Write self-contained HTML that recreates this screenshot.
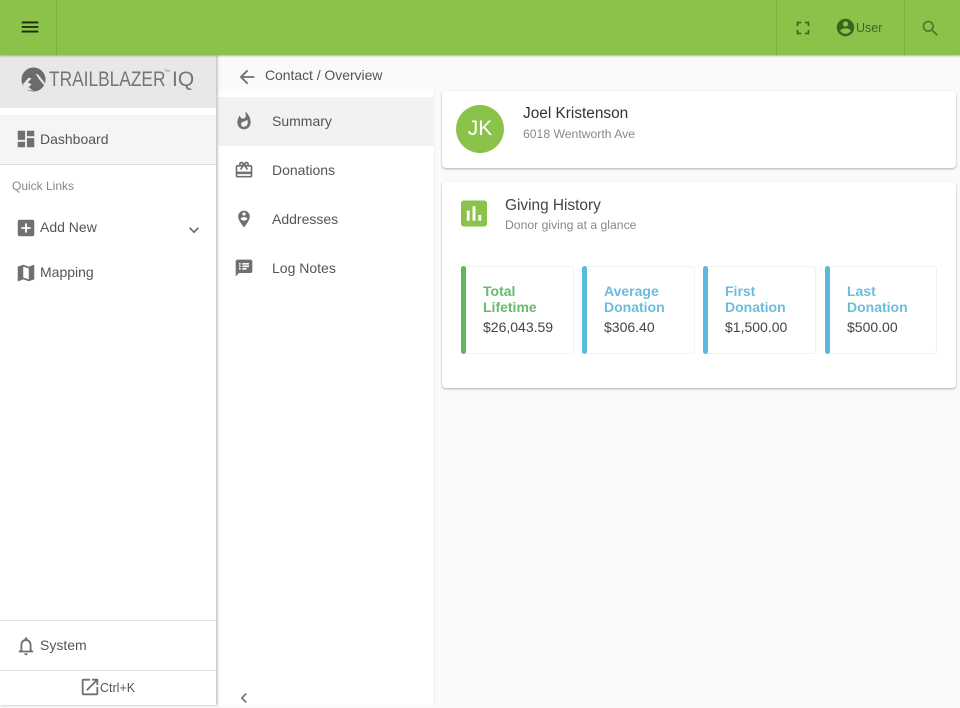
<!DOCTYPE html>
<html><head><meta charset="utf-8">
<style>
*{box-sizing:border-box}
html,body{margin:0;padding:0;width:960px;height:705px;overflow:hidden;background:#fafafa;font-family:"Liberation Sans",sans-serif;color:#555}
.a{position:absolute}
.t{position:absolute;white-space:nowrap;line-height:16px;font-size:14px;color:#555}
svg.i{position:absolute;width:22px;height:22px;fill:#707070}
.card{position:absolute;background:#fff;border-radius:4px;box-shadow:0 1px 2px rgba(0,0,0,.3)}
.st{position:absolute;top:266px;height:88px;background:#fff;border:1px solid #f2f2f2;border-radius:3px}
.st i{position:absolute;left:-1px;top:-1px;bottom:-1px;width:5px;background:#5bb9dc;border-radius:3px}
.st b{position:absolute;left:21px;top:16px;font-size:14px;line-height:16px;color:#6cbcdc;white-space:nowrap}
.st span{position:absolute;left:21px;top:52px;font-size:14px;line-height:16px;color:#444;white-space:nowrap}
</style></head><body>

<div class="a" style="left:218px;top:56px;width:217px;height:649px;background:#fff"></div>
<div class="a" style="left:218px;top:56px;width:217px;height:35px;background:#fafafa"></div>
<div class="a" style="left:434px;top:91px;width:1px;height:614px;background:#eee"></div>
<div class="a" style="left:218px;top:97px;width:217px;height:49px;background:#f2f2f2"></div>

<!-- top bar -->
<div class="a" style="left:0;top:0;width:960px;height:55px;background:#8bc34a;box-shadow:0 1px 2px rgba(0,0,0,.3);z-index:5">
  <div class="a" style="left:56px;top:0;width:1px;height:55px;background:#7cb342"></div>
  <div class="a" style="left:776px;top:0;width:1px;height:55px;background:#7cb342"></div>
  <div class="a" style="left:904px;top:0;width:1px;height:55px;background:#7cb342"></div>
  <svg class="i" viewBox="0 0 24 24" style="left:19px;top:16px;fill:#1b2a10"><path d="M3 18h18v-2H3v2zm0-5h18v-2H3v2zm0-7v2h18V6H3z"/></svg>
  <svg class="i" viewBox="0 0 24 24" style="left:792px;top:17px;fill:#41691f"><path d="M7 14H5v5h5v-2H7v-3zm-2-4h2V7h3V5H5v5zm12 7h-3v2h5v-5h-2v3zM14 5v2h3v3h2V5h-5z"/></svg>
  <svg class="i" viewBox="0 0 24 24" style="left:835px;top:17px;width:21px;height:21px;fill:#3d6320"><path d="M12 2C6.48 2 2 6.48 2 12s4.48 10 10 10 10-4.48 10-10S17.52 2 12 2zm0 3c1.66 0 3 1.34 3 3s-1.34 3-3 3-3-1.34-3-3 1.34-3 3-3zm0 14.2c-2.5 0-4.71-1.28-6-3.22.03-1.99 4-3.08 6-3.08 1.99 0 5.97 1.09 6 3.08-1.29 1.94-3.5 3.22-6 3.22z"/></svg>
  <div class="t" style="left:856px;top:20px;font-size:12.5px;color:#3f6622">User</div>
  <svg class="i" viewBox="0 0 24 24" style="left:920px;top:18px;width:21px;height:21px;fill:#4f7a2b"><path d="M15.5 14h-.79l-.28-.27C15.41 12.59 16 11.11 16 9.5 16 5.91 13.09 3 9.5 3S3 5.91 3 9.5 5.91 16 9.5 16c1.61 0 3.09-.59 4.23-1.57l.27.28v.79l5 4.99L20.49 19l-4.99-5zm-6 0C7.01 14 5 11.99 5 9.5S7.01 5 9.5 5 14 7.01 14 9.5 11.99 14 9.5 14z"/></svg>
</div>

<!-- sidebar -->
<div class="a" style="left:0;top:55px;width:216px;height:650px;background:#fff;box-shadow:1px 0 3px rgba(0,0,0,.3);z-index:3">
  <div class="a" style="left:0;top:0;width:216px;height:53px;background:#e8e8e8"></div>
  <svg class="a" viewBox="0 0 26 26" style="left:21px;top:12px;width:25px;height:25px">
    <circle cx="13" cy="13" r="12.5" fill="#6b6b6b"/>
    <path d="M11 6l-3 5 3 1-4 4 4 2-3 3 5 4-9-2-2-5 6-7z" fill="#e8e8e8"/>
    <path d="M15 7l3 1 7 9-1 2-5-6z" fill="#e8e8e8"/>
  </svg>
  <div class="t" style="left:49px;top:11px;font-size:21px;line-height:27px;color:#757575;transform-origin:left;transform:scaleX(.825)">TRAILBLAZER</div>
  <div class="t" style="left:164px;top:13px;font-size:4px;line-height:6px;color:#777">TM</div>
  <div class="t" style="left:172px;top:11px;font-size:21px;line-height:27px;color:#757575">IQ</div>

  <div class="a" style="left:0;top:60px;width:216px;height:50px;background:#f5f5f5;border-bottom:1px solid #ddd"></div>
  <svg class="i" viewBox="0 0 24 24" style="left:15px;top:73px"><path d="M3 13h8V3H3v10zm0 8h8v-6H3v6zm10 0h8V11h-8v10zm0-18v6h8V3h-8z"/></svg>
  <div class="t" style="left:40px;top:76px">Dashboard</div>

  <div class="t" style="left:12px;top:123px;font-size:12px;color:#888">Quick Links</div>

  <svg class="i" viewBox="0 0 24 24" style="left:15px;top:162px"><path d="M19 3H5c-1.11 0-2 .9-2 2v14c0 1.1.89 2 2 2h14c1.1 0 2-.9 2-2V5c0-1.1-.9-2-2-2zm-2 10h-4v4h-2v-4H7v-2h4V7h2v4h4v2z"/></svg>
  <div class="t" style="left:40px;top:164px">Add New</div>
  <svg class="i" viewBox="0 0 24 24" style="left:184px;top:165px;width:20px;height:20px"><path d="M16.59 8.59L12 13.17 7.41 8.59 6 10l6 6 6-6z"/></svg>

  <svg class="i" viewBox="0 0 24 24" style="left:15px;top:207px"><path d="M20.5 3l-.16.03L15 5.1 9 3 3.36 4.9c-.21.07-.36.25-.36.48V20.5c0 .28.22.5.5.5l.16-.03L9 18.9l6 2.1 5.64-1.9c.21-.07.36-.25.36-.48V3.5c0-.28-.22-.5-.5-.5zM15 19l-6-2.11V5l6 2.11V19z"/></svg>
  <div class="t" style="left:40px;top:209px">Mapping</div>

  <div class="a" style="left:0;top:565px;width:216px;height:1px;background:#e4e4e4"></div>
  <svg class="i" viewBox="0 0 24 24" style="left:15px;top:580px"><path d="M12 22c1.1 0 2-.9 2-2h-4c0 1.1.9 2 2 2zm6-6v-5c0-3.07-1.63-5.64-4.5-6.32V4c0-.83-.67-1.5-1.5-1.5s-1.5.67-1.5 1.5v.68C7.64 5.36 6 7.92 6 11v5l-2 2v1h16v-1l-2-2zm-2 1H8v-6c0-2.48 1.51-4.5 4-4.5s4 2.02 4 4.5v6z"/></svg>
  <div class="t" style="left:40px;top:582px">System</div>
  <div class="a" style="left:0;top:615px;width:216px;height:1px;background:#e4e4e4"></div>
  <svg class="i" viewBox="0 0 24 24" style="left:79px;top:621px"><path d="M19 19H5V5h7V3H5c-1.11 0-2 .9-2 2v14c0 1.1.89 2 2 2h14c1.1 0 2-.9 2-2v-7h-2v7zM14 3v2h3.59l-9.83 9.83 1.41 1.41L19 6.41V10h2V3h-7z"/></svg>
  <div class="t" style="left:100px;top:625px;font-size:12.5px">Ctrl+K</div>
</div>

<!-- secondary -->
<svg class="i" viewBox="0 0 24 24" style="left:236px;top:66px"><path d="M20 11H7.83l5.59-5.59L12 4l-8 8 8 8 1.41-1.41L7.83 13H20v-2z"/></svg>
<div class="t" style="left:265px;top:67px;letter-spacing:-.05px">Contact / Overview</div>

<svg class="i" viewBox="0 0 24 24" style="left:234px;top:111px;width:20px;height:20px"><path d="M13.5.67s.74 2.65.74 4.8c0 2.06-1.35 3.73-3.41 3.73-2.07 0-3.63-1.67-3.63-3.73l.03-.36C5.21 7.51 4 10.62 4 14c0 4.42 3.58 8 8 8s8-3.58 8-8C20 8.61 17.41 3.8 13.5.67zM11.71 19c-1.78 0-3.22-1.4-3.22-3.14 0-1.62 1.05-2.76 2.81-3.12 1.77-.36 3.6-1.21 4.62-2.58.39 1.29.59 2.65.59 4.04 0 2.65-2.15 4.8-4.8 4.8z"/></svg>
<div class="t" style="left:272px;top:113px">Summary</div>
<svg class="i" viewBox="0 0 24 24" style="left:234px;top:160px;width:20px;height:20px"><path d="M20 6h-2.18c.11-.31.18-.65.18-1 0-1.66-1.34-3-3-3-1.05 0-1.96.54-2.5 1.35l-.5.67-.5-.68C10.96 2.54 10.05 2 9 2 7.34 2 6 3.34 6 5c0 .35.07.69.18 1H4c-1.11 0-1.99.89-1.99 2L2 19c0 1.11.89 2 2 2h16c1.11 0 2-.89 2-2V8c0-1.11-.89-2-2-2zm-5-2c.55 0 1 .45 1 1s-.45 1-1 1-1-.45-1-1 .45-1 1-1zM9 4c.55 0 1 .45 1 1s-.45 1-1 1-1-.45-1-1 .45-1 1-1zm11 15H4v-2h16v2zm0-5H4V8h5.08L7 10.83 8.62 12 11 8.76l1-1.36 1 1.36L15.38 12 17 10.83 14.92 8H20v6z"/></svg>
<div class="t" style="left:272px;top:162px">Donations</div>
<svg class="i" viewBox="0 0 24 24" style="left:234px;top:209px;width:20px;height:20px"><path d="M12 2C8.14 2 5 5.14 5 9c0 5.25 7 13 7 13s7-7.75 7-13c0-3.86-3.14-7-7-7zm0 2c1.1 0 2 .9 2 2 0 1.11-.9 2-2 2s-2-.89-2-2c0-1.1.9-2 2-2zm0 10c-1.67 0-3.14-.85-4-2.15.02-1.32 2.67-2.05 4-2.05s3.98.73 4 2.05c-.86 1.3-2.33 2.15-4 2.15z"/></svg>
<div class="t" style="left:272px;top:211px">Addresses</div>
<svg class="i" viewBox="0 0 24 24" style="left:234px;top:258px;width:20px;height:20px"><path d="M20 2H4c-1.1 0-1.99.9-1.99 2L2 22l4-4h14c1.1 0 2-.9 2-2V4c0-1.1-.9-2-2-2zM8 14H6v-2h2v2zm0-3H6V9h2v2zm0-3H6V6h2v2zm7 6h-5v-2h5v2zm3-3h-8V9h8v2zm0-3h-8V6h8v2z"/></svg>
<div class="t" style="left:272px;top:260px">Log Notes</div>
<svg class="i" viewBox="0 0 24 24" style="left:234px;top:688px;width:20px;height:20px"><path d="M15.41 7.41L14 6l-6 6 6 6 1.41-1.41L10.83 12z"/></svg>

<!-- contact card -->
<div class="card" style="left:442px;top:91px;width:514px;height:77px"></div>
<div class="a" style="left:456px;top:105px;width:48px;height:48px;border-radius:50%;background:#8bc34a;color:#fff;font-size:21px;line-height:48px;text-align:center">JK</div>
<div class="t" style="left:523px;top:105px;font-size:15.4px;line-height:18px;color:#333">Joel Kristenson</div>
<div class="t" style="left:523px;top:126px;font-size:12.2px;color:#888">6018 Wentworth Ave</div>

<!-- giving card -->
<div class="card" style="left:442px;top:182px;width:514px;height:206px"></div>
<svg class="i" viewBox="3 3 18 18" style="left:461px;top:200px;width:26px;height:27px;fill:#8bc34a"><path d="M19 3H5c-1.1 0-2 .9-2 2v14c0 1.1.9 2 2 2h14c1.1 0 2-.9 2-2V5c0-1.1-.9-2-2-2zM9 17H7v-7h2v7zm4 0h-2V7h2v10zm4 0h-2v-4h2v4z"/></svg>
<div class="t" style="left:505px;top:197px;font-size:15.4px;line-height:18px;color:#444">Giving History</div>
<div class="t" style="left:505px;top:217px;font-size:12.2px;color:#888">Donor giving at a glance</div>

<div class="st" style="left:461px;width:113px"><i style="background:#5cb860"></i><b style="color:#66bb6a">Total<br>Lifetime</b><span>$26,043.59</span></div>
<div class="st" style="left:582px;width:113px"><i></i><b>Average<br>Donation</b><span>$306.40</span></div>
<div class="st" style="left:703px;width:113px"><i></i><b>First<br>Donation</b><span>$1,500.00</span></div>
<div class="st" style="left:825px;width:112px"><i></i><b>Last<br>Donation</b><span>$500.00</span></div>

</body></html>
